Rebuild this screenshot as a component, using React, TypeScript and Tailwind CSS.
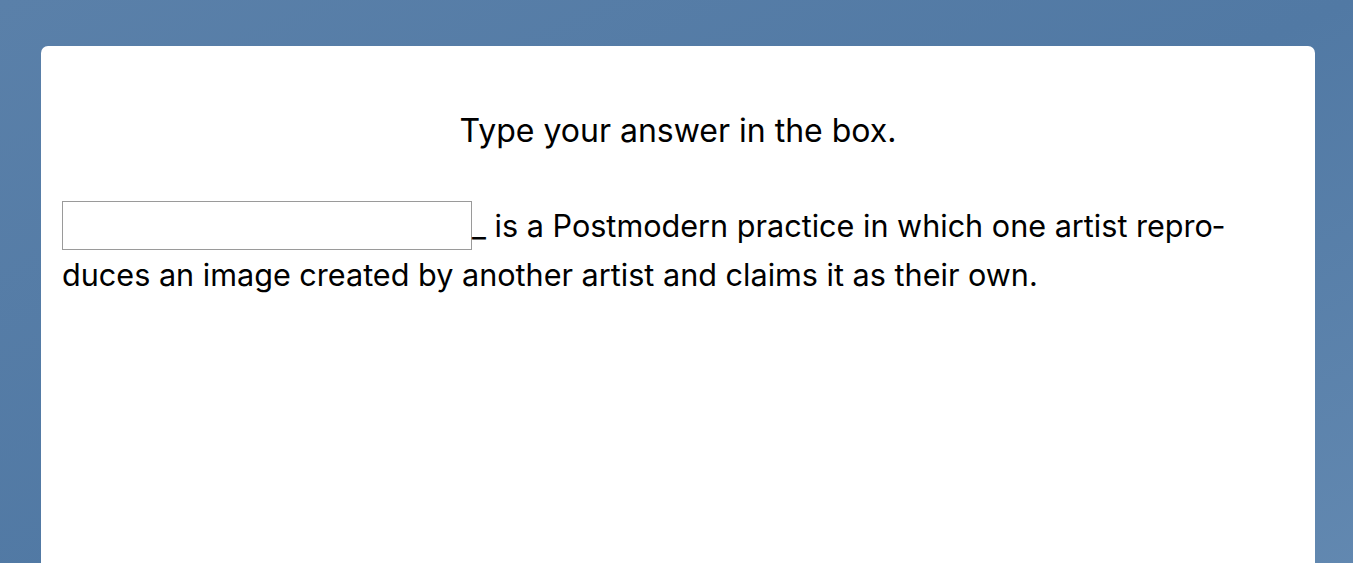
import React, { useState } from "react";

export default function App() {
  const [answer, setAnswer] = useState("");

  return (
    <div
      className="min-h-screen w-full overflow-hidden bg-gradient-to-br from-[#5a80a9] via-[#5179a4] to-[#6389b1] pt-[46px] pl-[41px] pr-[38px]"
      style={{ fontFamily: 'Inter, "Liberation Sans", Arial, sans-serif' }}
    >
      <div className="bg-white rounded-t-[7px] min-h-[560px] px-[21px] pt-[60px] text-black">
        {/* Instructions */}
        <p className="text-center text-[32px] leading-[49px] mb-[46px]">
          Type your answer in the box.
        </p>

        {/* Question */}
        <p lang="en" className="text-[30.6px] leading-[49px]">
          <input
            type="text"
            value={answer}
            onChange={(e) => setAnswer(e.target.value)}
            aria-label="Answer"
            className="inline-block align-[3px] w-[410px] h-[49px] border border-[#9a9a9a] bg-white px-2 text-[24px] focus:outline-none"
          />
          _ is a Postmodern practice in which one artist repro{"\u00AD"}duces an
          image created by another artist and claims it as their own.
        </p>
      </div>
    </div>
  );
}
